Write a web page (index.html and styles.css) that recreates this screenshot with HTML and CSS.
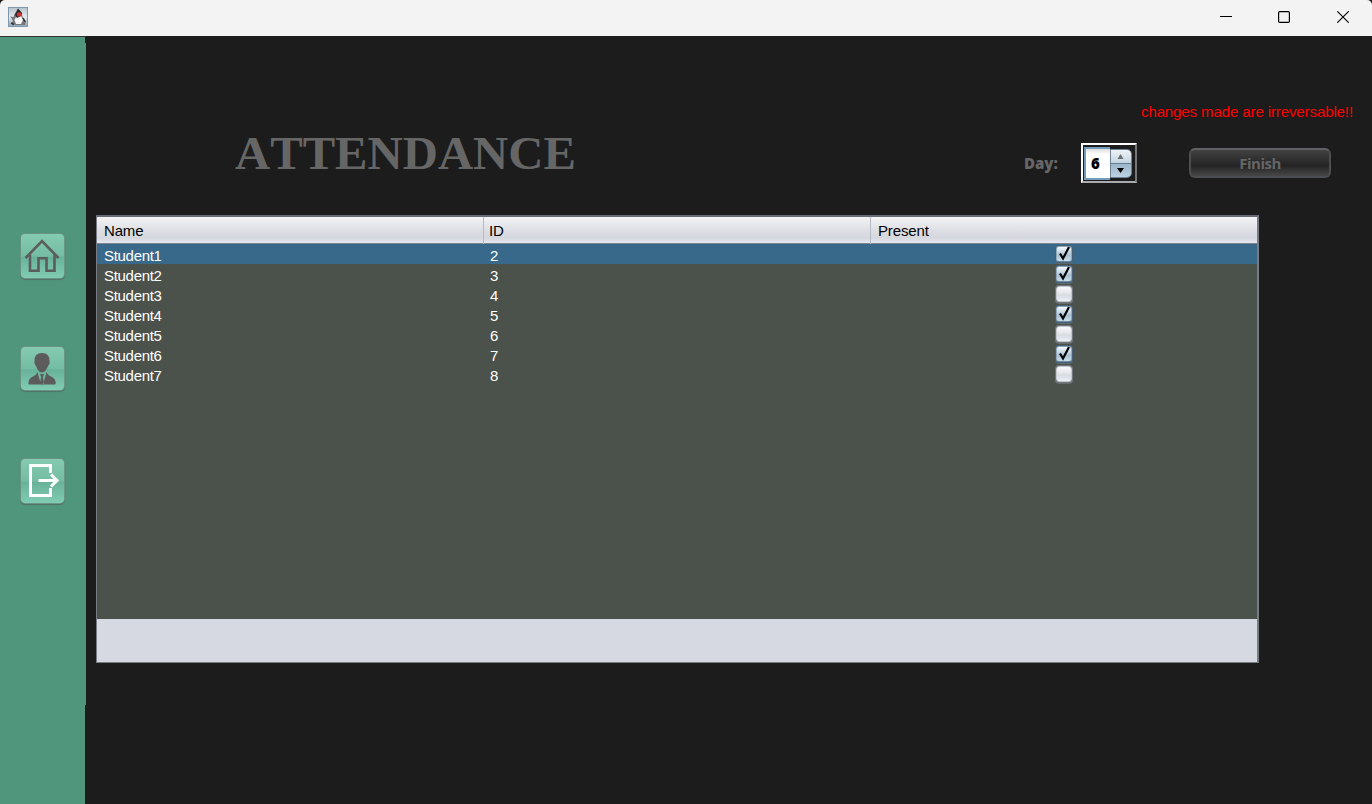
FILE: index.html
```html
<!DOCTYPE html>
<html lang="en">
<head>
<meta charset="utf-8">
<title>Attendance</title>
<link rel="stylesheet" href="styles.css">
</head>
<body>
<div class="window">
  <header class="titlebar">
    <svg class="app-icon" width="20" height="20" viewBox="0 0 20 20">
      <defs><linearGradient id="sky" x1="0" y1="0" x2="0" y2="1"><stop offset="0" stop-color="#b4c3cd"/><stop offset=".5" stop-color="#e6eaed"/><stop offset="1" stop-color="#8fa5b6"/></linearGradient></defs>
      <rect x=".5" y=".5" width="19" height="19" fill="url(#sky)" stroke="#7f98ab"/>
      <path d="M10 1.500L6.500 7L5.500 10L2 9.500L4 12L5 14L3 17L8 18H17L18 14L15 11L13 5Z" fill="#77797b"/>
      <path d="M8 10L13 9L15 13L13 17L8 17L6.500 13Z" fill="#f8f8f8"/>
      <path d="M10 1.500L7 8L9 11L13 9L14 6Z" fill="#27292b"/>
      <path d="M3 16L6 17.500M15 11L17 15" stroke="#333" stroke-width="1.500"/>
      <circle cx="11" cy="7.500" r="2.200" fill="#d43236"/>
    </svg>
    <div class="controls">
      <svg width="12" height="12"><path d="M0 5.500H12" stroke="#000"/></svg>
      <svg width="12" height="12"><rect x=".6" y=".6" width="10.800" height="10.800" rx="1.200" fill="none" stroke="#000" stroke-width="1.200"/></svg>
      <svg width="12" height="12"><path d="M.3 .3L11.700 11.700M11.700 .3L.3 11.700" stroke="#000" stroke-width="1.100"/></svg>
    </div>
  </header>
  <div class="body">
    <nav class="sidebar">
      <button class="nav-button"><svg width="44" height="44" viewBox="0 0 44 44" fill="none" stroke="#5c5c5c" stroke-width="2.600"><path d="M5.500 24L22 7L38.500 24"/><path d="M10 20.500V36.700H18.500V24.300H26.500V36.700H34.500V20.500"/></svg></button>
      <button class="nav-button"><svg width="44" height="44" viewBox="0 0 44 44" fill="#5c5c5c"><path d="M22 6C17 6 14.300 9 14.600 13.500C13.800 15 15 18 15.800 18.500C17 22 19 25.500 22 25.500C25 25.500 27 22 28.200 18.500C29.500 18 30.200 15 29.400 13.500C29.700 9 27 6 22 6Z"/><path d="M17.500 25L21 37.500H9C8 37 8.500 33 10 31.500C12 29.500 16 29 17.500 25ZM26.500 25L23 37.500H35C36.500 37 35.500 33 34 31.500C32 29.500 28 29 26.500 25ZM20 27H24L23 30L24 36.500L22 38L20 36.500L21 30Z"/></svg></button>
      <button class="nav-button"><svg width="44" height="44" viewBox="0 0 44 44" fill="none" stroke="#fff" stroke-width="3"><path d="M29.500 15V7.500H9.500V37.500H29.500V30"/><path d="M17.500 22.500H36M30 16.500L36 22.500L30 28.500"/></svg></button>
    </nav>
    <main class="content">
      <div class="heading">
        <h1>ATTENDANCE</h1>
        <div class="tools">
          <p class="warning">changes made are irreversable!!</p>
          <div class="actions">
            <label class="day">Day:</label>
            <div class="spinner">
              <span class="value">6</span>
              <span class="arrows">
                <span class="arrow"><svg width="7" height="5"><path d="M3.500 0L6.500 5H.5Z" fill="#6b7075"/></svg></span>
                <span class="arrow down"><svg width="7" height="5"><path d="M0 0H7L3.500 5Z" fill="#000"/></svg></span>
              </span>
            </div>
            <button class="finish">Finish</button>
          </div>
        </div>
      </div>
      <section class="panel">
        <div class="row head"><span>Name</span><span>ID</span><span>Present</span></div>
        <div class="rows">
          <div class="row selected"><span>Student1</span><span>2</span><span class="cell"><i class="box on"><svg width="16" height="16"><path d="M4 7.500L7 12.500L13 1" /></svg></i></span></div>
          <div class="row"><span>Student2</span><span>3</span><span class="cell"><i class="box on"><svg width="16" height="16"><path d="M4 7.500L7 12.500L13 1" /></svg></i></span></div>
          <div class="row"><span>Student3</span><span>4</span><span class="cell"><i class="box"></i></span></div>
          <div class="row"><span>Student4</span><span>5</span><span class="cell"><i class="box on"><svg width="16" height="16"><path d="M4 7.500L7 12.500L13 1" /></svg></i></span></div>
          <div class="row"><span>Student5</span><span>6</span><span class="cell"><i class="box"></i></span></div>
          <div class="row"><span>Student6</span><span>7</span><span class="cell"><i class="box on"><svg width="16" height="16"><path d="M4 7.500L7 12.500L13 1" /></svg></i></span></div>
          <div class="row"><span>Student7</span><span>8</span><span class="cell"><i class="box"></i></span></div>
        </div>
        <div class="panel-foot"></div>
      </section>
    </main>
  </div>
</div>
</body>
</html>
```

FILE: styles.css
```css
* { box-sizing: border-box; }
body { margin: 0; background: #1c1c1c; font-family: "Liberation Sans", Arial, sans-serif; font-size: 15px; }
button { padding: 0; border: 0; font: inherit; }
.window { width: 1372px; height: 804px; display: flex; flex-direction: column; overflow: hidden; background: #1c1c1c; }
.titlebar { height: 36px; flex: none; display: flex; justify-content: space-between; padding: 7px 23px 0 8px; background: #f3f3f3; border-radius: 5px 5px 0 0; }
.controls { display: flex; gap: 47px; padding-top: 4px; }
.controls svg:nth-child(2) { margin-right: -1px; margin-left: -1px; }
.controls svg:last-child { margin-left: 1px; }
.body { flex: 1; display: flex; }
.sidebar { width: 86px; flex: none; display: flex; flex-direction: column; align-items: flex-start; gap: 69px; padding: 197px 0 0 21px; border-top: 1px solid #303331;
  background: linear-gradient(#50967d, #50967d) 0 0 / 85px 100% no-repeat, linear-gradient(#50967d, #50967d) 85px 6px / 1px 662px no-repeat; }
.nav-button { width: 43px; height: 43.500px; flex: none; border-radius: 4px; background: linear-gradient(#84cbb2, #74bca3 50%, #68b299 53%, #80ccb2); box-shadow: 0 0 0 1px #6a9485, 0 1px 1px 1px #526f65; }
.nav-button svg { display: block; margin: 0 0 0 -1px; }
.nav-button:last-child svg { margin: -1px 0 0; }
.content { flex: 1; padding: 0 19px 0 10px; }
.heading { height: 179px; display: flex; justify-content: space-between; padding-left: 139px; }
h1 { margin: 90px 0 0; font: bold 47px/54px "Liberation Serif", serif; color: #666; transform: scaleX(1.036); transform-origin: 0 0; font-kerning: none; }
.tools { padding-top: 66px; }
.warning { margin: 0; text-align: right; line-height: 20px; letter-spacing: -.1px; color: #f00; }
.actions { display: flex; align-items: center; margin-top: 21px; padding-right: 22px; font: 800 15px/20px "Open Sans", sans-serif; color: #666; }
.day { width: 57px; }
.spinner { width: 56px; height: 40px; display: flex; padding: 4px 3px 3px 1px; border: 2px solid; border-color: #fff #77777b #aaaab0 #fff; background: #1c1c1c; }
.spinner .value { width: 26px; height: 33px; margin-top: -2px; padding: 3px 0 0 5px; border: 2px solid #739bbc; border-right: 0; background: linear-gradient(#ddd, #fff 5px); color: #000; line-height: 22px; }
.arrows { width: 23px; height: 29px; display: flex; flex-direction: column; border-radius: 0 5px 5px 0; overflow: hidden; border: 1px solid #6c8294; }
.arrow { height: 13px; display: grid; place-items: center; background: linear-gradient(#edf3f7, #c4d3df); }
.arrow.down { height: 14px; border-top: 1px solid #637d91; background: linear-gradient(#9db5c8, #bdd2e3); }
.arrow svg { display: block; margin-right: 1px; }
.finish { width: 142px; height: 30px; margin-left: 52px; border: 2px solid #4b4d50; border-top-color: #606164; border-radius: 6px; background: linear-gradient(#424242, #242424 60%, #474747); color: #666; font-weight: 700; letter-spacing: -.5px; }
.panel { width: 1163px; height: 448px; display: flex; flex-direction: column; border: solid #777b83; border-width: 2px 2px 1px 1px; border-top-color: #686b72; background: #4b514b; }
.row { display: grid; grid-template-columns: 386px 387px 1fr; height: 20px; line-height: 24px; letter-spacing: -.3px; color: #fff; }
.row > span { padding-left: 7px; }
.head { height: 27px; flex: none; line-height: 27px; color: #000; letter-spacing: -.15px; border-bottom: 1px solid #7c858e; background: linear-gradient(#f4f4f5, #dedfe5 50%, #d5d7de 80%, #e5e8f0); }
.head > span + span { border-left: 1px solid #b6b9c1; padding-left: 5px; }
.head > span:last-child { padding-left: 7px; }
.rows { flex: 1; }
.selected { background: #39698a; }
.row > .cell { display: flex; justify-content: center; padding: 2px 0 0; }
.box { display: block; width: 16px; height: 16px; border: 1px solid #c5c7ce; border-radius: 3px; background: linear-gradient(#fbfbfc, #d9dbe2 60%, #eceef5); box-shadow: 0 0 0 1px #70767b, 0 1px 0 1px #656c70; }
.box.on { border-color: #91a9bb; border-bottom-color: #6d8ba3; background: linear-gradient(#f5f9fc, #a9c0d3 60%, #c9dfee); box-shadow: 0 0 0 1px #465f75, 0 1px 0 1px #5d6b73; }
.box svg { display: block; margin: -1px; overflow: visible; fill: none; stroke: #000; stroke-width: 2.200; }
.panel-foot { height: 43px; flex: none; background: #d6d9e1; }
```
